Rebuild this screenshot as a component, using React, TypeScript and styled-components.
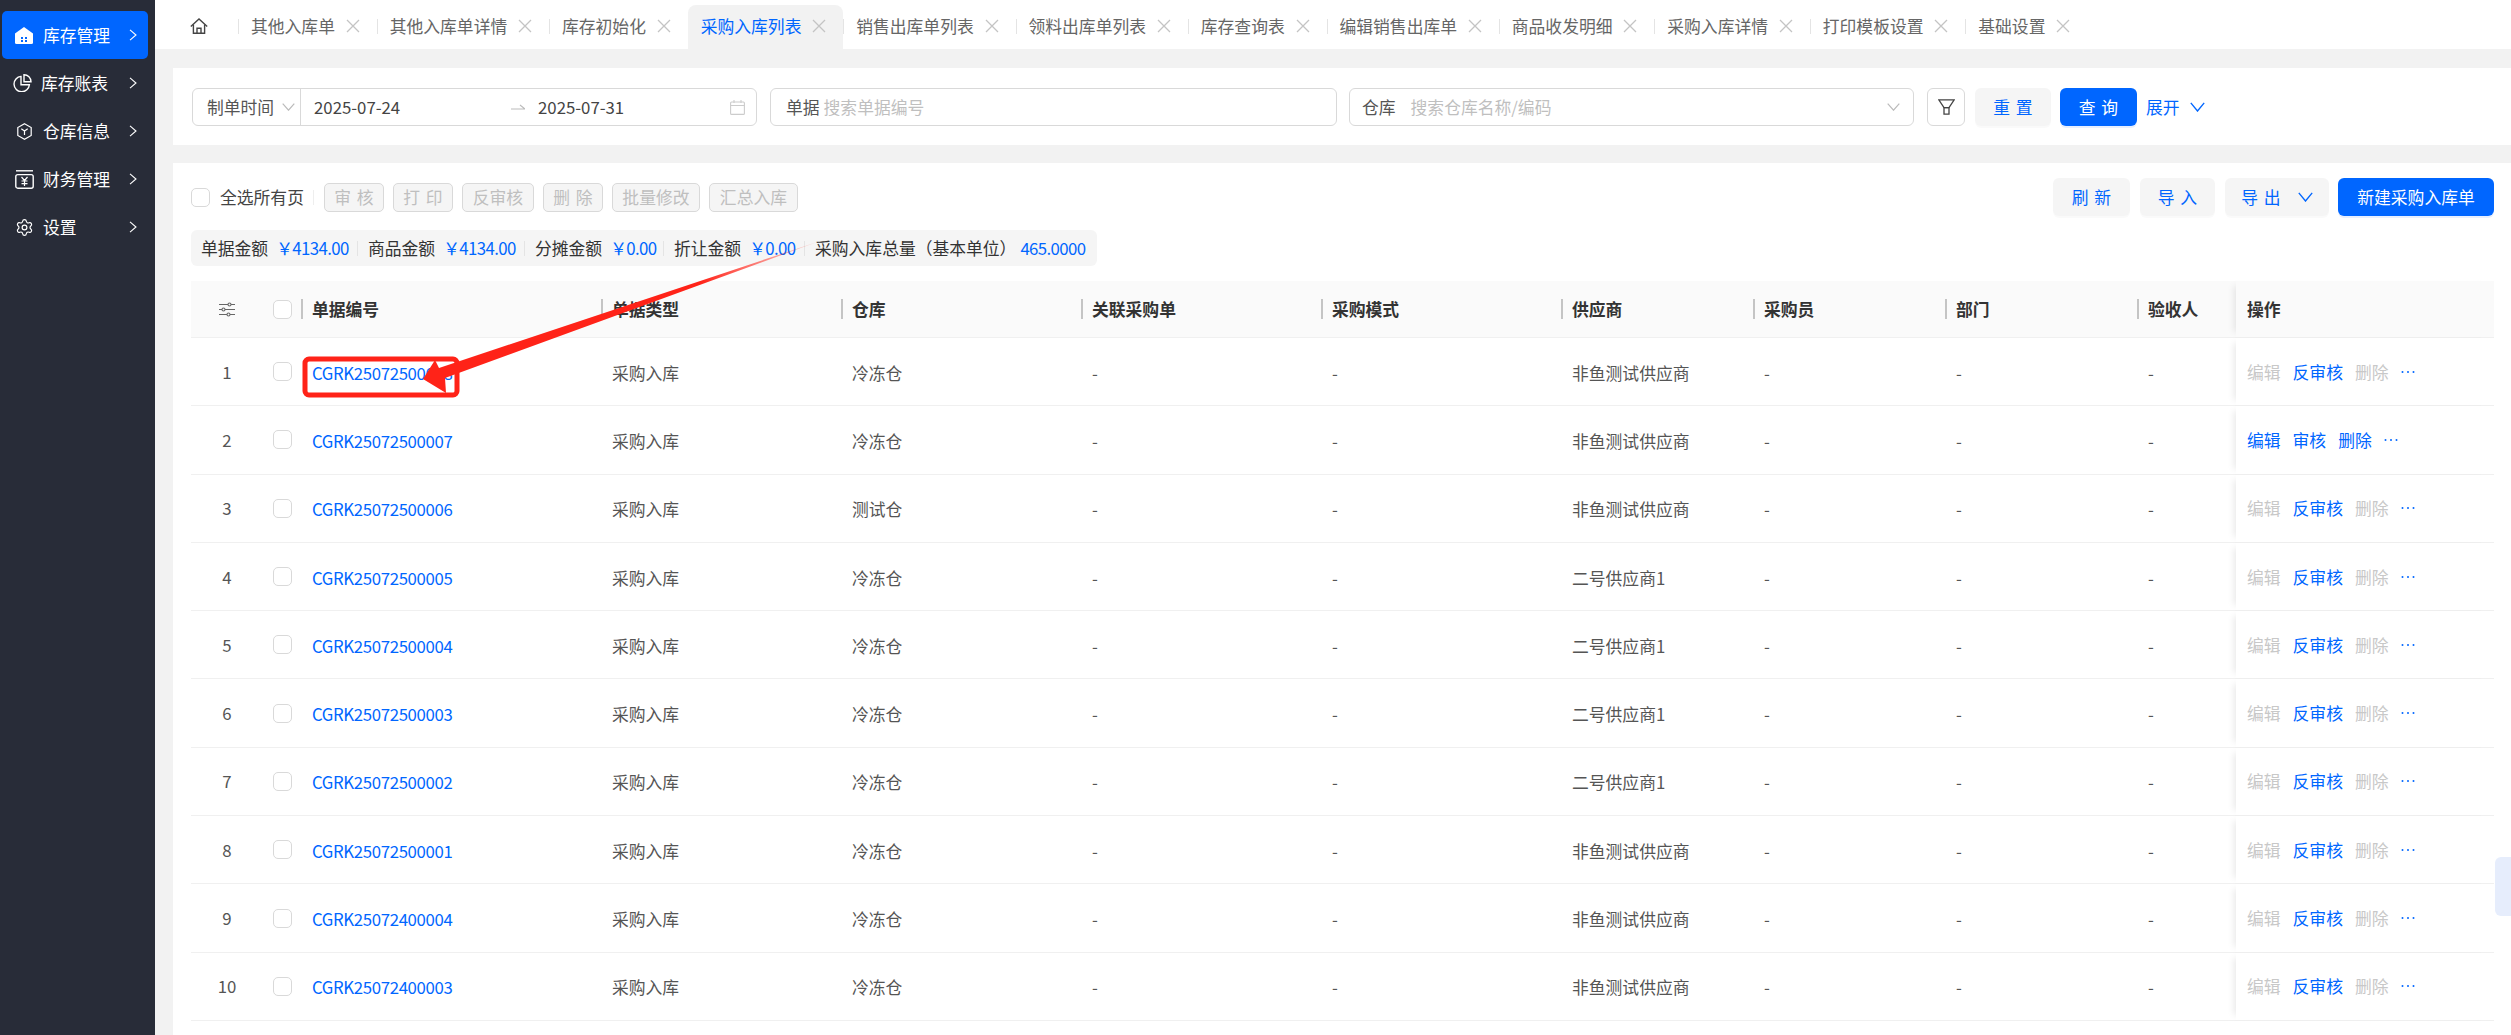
import React from 'react';
import styled, { createGlobalStyle } from 'styled-components';
import { Settings } from 'lucide-react';

const BLUE = '#0066ff';
const COLS = '72px 38px 300px 240px 240px 240px 240px 192px 192px 192px 99px 258px';

const GlobalStyle = createGlobalStyle`
  html, body { margin: 0; padding: 0; height: 100%; overflow: hidden; }
  body {
    font-family: "Noto Sans CJK SC", "Noto Sans", sans-serif;
    font-size: 16.8px;
    color: #555;
    background: #f2f2f2;
  }
  * { box-sizing: border-box; }
`;

const Shell = styled.div`
  position: relative;
  display: flex;
  width: 2511px;
  height: 1035px;
  overflow: hidden;
`;

/* sidebar */
const Sidebar = styled.nav`
  width: 155px;
  flex: none;
  background: #282c38;
  padding-top: 11px;
  display: flex;
  flex-direction: column;
`;

const NavItem = styled.div<{ $active?: boolean }>`
  height: 48px;
  margin: 0 7px 0 2px;
  border-radius: 5px;
  display: flex;
  align-items: center;
  color: #fff;
  background: ${p => (p.$active ? BLUE : 'transparent')};
`;

const NavIcon = styled.span`
  width: 41px;
  flex: none;
  display: flex;
  justify-content: center;
  padding-left: 3px;
`;

const NavLabel = styled.span<{ $shift?: number }>`
  flex: 1;
  margin-left: ${p => p.$shift || 0}px;
  line-height: 1;
  white-space: nowrap;
`;

const NavArrow = styled.svg`
  width: 8px;
  height: 12px;
  margin-right: 11px;
  flex: none;
`;

/* tabs */
const Main = styled.main`
  flex: 1;
  min-width: 0;
  display: flex;
  flex-direction: column;
`;

const TabBar = styled.div`
  height: 49px;
  flex: none;
  background: #fff;
  display: flex;
  align-items: flex-end;
`;

const HomeSlot = styled.div`
  width: 83px;
  height: 44px;
  padding: 0 0 3px 35px;
  display: flex;
  align-items: center;
  flex: none;
`;

const Tab = styled.div<{ $active?: boolean }>`
  position: relative;
  height: 44px;
  flex: none;
  padding: 0 16.8px 2px 13px;
  display: flex;
  align-items: center;
  gap: 11px;
  white-space: nowrap;
  color: ${p => (p.$active ? BLUE : '#666')};
  background: ${p => (p.$active ? '#f2f2f2' : '#fff')};
  border-radius: 8px 8px 0 0;
  &::before {
    content: '';
    display: ${p => (p.$active ? 'none' : 'block')};
    position: absolute;
    left: 0;
    top: 14px;
    width: 1px;
    height: 15px;
    background: #e4e4e4;
  }
`;

const CloseIcon = styled.svg`
  width: 14px;
  height: 14px;
  flex: none;
`;

/* filter card */
const FilterCard = styled.section`
  margin: 19px 0 18px 18px;
  height: 77px;
  flex: none;
  background: #fff;
  padding: 20px 0 0 19px;
  display: flex;
  align-items: flex-start;
`;

const Field = styled.div<{ $w: number; $mr: number }>`
  width: ${p => p.$w}px;
  margin-right: ${p => p.$mr}px;
  flex: none;
  height: 38px;
  border: 1.5px solid #d9d9d9;
  border-radius: 6px;
  display: flex;
  align-items: center;
  color: #555;
  background: #fff;
`;

const TimeSelect = styled.div`
  width: 108px;
  height: 100%;
  flex: none;
  padding-left: 14px;
  display: flex;
  align-items: center;
  gap: 8px;
  border-right: 1.5px solid #d9d9d9;
`;

const DateText = styled.span<{ $w: number; $left: number; $pad: number }>`
  width: ${p => p.$w}px;
  margin-left: ${p => p.$left}px;
  padding-left: ${p => p.$pad}px;
  flex: none;
  color: #444;
`;

const Placeholder = styled.span`
  color: #bfbfbf;
`;

const FieldLabel = styled.span<{ $gap: number; $pad: number }>`
  margin: 0 ${p => p.$gap}px 0 ${p => p.$pad}px;
  flex: none;
`;

const Spacer = styled.span`
  flex: 1;
`;

const TrailIcon = styled.span<{ $mr: number }>`
  display: flex;
  margin-right: ${p => p.$mr}px;
`;

const IconField = styled.div`
  width: 38px;
  height: 38px;
  margin-right: 10px;
  flex: none;
  border: 1.5px solid #d9d9d9;
  border-radius: 6px;
  display: flex;
  align-items: center;
  justify-content: center;
`;

const Button = styled.button<{ $primary?: boolean; $w: number; $mr?: number }>`
  width: ${p => p.$w}px;
  margin-right: ${p => p.$mr || 0}px;
  height: 38px;
  flex: none;
  border: 0;
  border-radius: 6px;
  font: inherit;
  padding: 0;
  display: flex;
  align-items: center;
  justify-content: center;
  gap: 17px;
  white-space: pre;
  word-spacing: 2px;
  color: ${p => (p.$primary ? '#fff' : BLUE)};
  background: ${p => (p.$primary ? BLUE : '#f5f5f5')};
  box-shadow: 0 2px 0 ${p => (p.$primary ? 'rgba(5,95,255,.1)' : 'rgba(0,0,0,.02)')};
`;

const Expand = styled.div`
  display: flex;
  align-items: center;
  height: 38px;
  gap: 10px;
  color: ${BLUE};
`;

/* list card */
const ListCard = styled.section`
  flex: 1;
  margin-left: 18px;
  background: #fff;
  padding: 15px 17px 0 18px;
  min-height: 0;
  overflow: hidden;
`;

const Toolbar = styled.div`
  height: 38px;
  display: flex;
  align-items: center;
  justify-content: space-between;
`;

const ToolGroup = styled.div`
  display: flex;
  align-items: center;
`;

const Check = styled.span`
  width: 19px;
  height: 19px;
  flex: none;
  display: block;
  border: 1px solid #d9d9d9;
  border-radius: 5px;
  background: #fff;
`;

const AllPages = styled.span`
  margin-left: 10px;
  color: #444;
  white-space: nowrap;
`;

const VDivider = styled.span`
  width: 1px;
  height: 15px;
  margin: 0 10px 0 9px;
  background: #eee;
`;

const GhostButton = styled.span<{ $w: number }>`
  width: ${p => p.$w}px;
  height: 29px;
  margin-right: 9px;
  flex: none;
  display: flex;
  align-items: center;
  justify-content: center;
  white-space: pre;
  word-spacing: 2px;
  border: 1px solid #d9d9d9;
  border-radius: 5px;
  background: #f5f5f5;
  color: #bfbfbf;
`;

const SummaryBar = styled.div`
  width: 906px;
  height: 36px;
  margin-top: 14px;
  padding-left: 10px;
  background: #f5f5f5;
  border-radius: 6px;
  display: flex;
  align-items: center;
  color: #333;
  white-space: nowrap;
`;

const SummaryItem = styled.span<{ $w: number; $last?: boolean }>`
  width: ${p => p.$w}px;
  flex: none;
  position: relative;
  display: flex;
  gap: ${p => (p.$last ? 4 : 8)}px;
  &::after {
    content: '';
    display: ${p => (p.$last ? 'none' : 'block')};
    position: absolute;
    right: 10px;
    top: 5px;
    width: 1px;
    height: 15px;
    background: #e4e4e4;
  }
`;

const Money = styled.span`
  color: ${BLUE};
  letter-spacing: -0.6px;
`;

/* table */
const Table = styled.div`
  margin-top: 15px;
`;

const HeadRow = styled.div`
  display: grid;
  grid-template-columns: ${COLS};
  height: 57px;
  background: #fafafa;
  border-bottom: 1px solid #f0f0f0;
  color: #333;
  font-weight: 700;
`;

const BodyRow = styled.div`
  display: grid;
  grid-template-columns: ${COLS};
  height: 68.3px;
  border-bottom: 1px solid #f0f0f0;
`;

const Cell = styled.div`
  display: flex;
  align-items: center;
  padding-left: 11px;
  white-space: nowrap;
`;

const DataCell = styled(Cell)`
  padding-top: 2px;
`;

const HeadCell = styled(Cell)`
  position: relative;
  &::before {
    content: '';
    position: absolute;
    left: 0;
    top: 18px;
    width: 2px;
    height: 20px;
    background: #c4c4c4;
  }
`;

const IndexCell = styled(Cell)`
  justify-content: center;
  padding: 0;
`;

const CheckCell = styled(Cell)`
  padding-left: 10px;
`;

const DocLink = styled.span`
  color: ${BLUE};
  letter-spacing: -0.35px;
`;

const OpCell = styled(Cell)`
  padding-left: 11px;
  gap: 12px;
  background: inherit;
  box-shadow: -7px 0 7px -5px rgba(0, 0, 0, 0.09);
`;

const HeadOp = styled(OpCell)`
  background: #fafafa;
`;

const OpLink = styled.span<{ $off?: boolean }>`
  color: ${p => (p.$off ? '#c8c8c8' : BLUE)};
`;

const BodyArea = styled.div`
  background: #fff;
`;

const SideTab = styled.div`
  position: absolute;
  right: 0;
  top: 857px;
  width: 16px;
  height: 59px;
  background: #e6edfc;
  border-radius: 6px 0 0 6px;
`;

const Annotation = styled.svg`
  position: absolute;
  left: 0;
  top: 0;
  pointer-events: none;
`;

const Chevron = ({ color = '#bbb', w = 13, h = 8 }: { color?: string; w?: number; h?: number }) => (
  <svg width={w} height={h} viewBox="0 0 13 8" preserveAspectRatio="none" fill="none">
    <path d="M.7.7 6.5 7.2 12.3.7" stroke={color} strokeWidth="1.2" />
  </svg>
);

const Close = () => (
  <CloseIcon viewBox="0 0 14 14" fill="none">
    <path d="M1 1 13 13M13 1 1 13" stroke="#c4c4c4" strokeWidth="1.3" />
  </CloseIcon>
);

const Dots = () => (
  <svg width="14" height="4" viewBox="0 0 14 4" fill={BLUE}>
    <circle cx="1.5" cy="2" r="1" />
    <circle cx="7" cy="2" r="1" />
    <circle cx="12.5" cy="2" r="1" />
  </svg>
);

const HomeOutline = () => (
  <svg width="18" height="16" viewBox="0 0 18 16" fill="none" stroke="#444" strokeWidth="1.4">
    <path d="M.8 8.4 9 1l8.2 7.4" />
    <path d="M3.4 6.6v8.7h11.2V6.6" />
    <path d="M7 15.3v-5h4v5" />
  </svg>
);

const navIcons = [
  <svg key="a" width="18" height="17" viewBox="0 0 18 17">
    <path d="M9 0 18 6.5V15.5q0 1.5-1.5 1.5h-15Q0 17 0 15.5V6.5Z" fill="#fff" />
    <path d="M6 10h2v2H6zM10 10h2v2h-2zM6 13h2v2H6zM10 13h2v2h-2z" fill={BLUE} />
  </svg>,
  <svg key="b" width="19" height="18" viewBox="0 0 19 18" fill="none" stroke="#fff" strokeWidth="1.4" style={{ marginLeft: -4 }}>
    <path d="M8 2.4a7.7 7.7 0 1 0 8.4 8.4H8Z" />
    <path d="M11 .8a7 7 0 0 1 7 7h-7Z" />
  </svg>,
  <svg key="c" width="15" height="17" viewBox="0 0 15 17" fill="none" stroke="#fff" strokeWidth="1.2">
    <path d="M7.5.8 14.2 4.6v7.8L7.5 16.2.8 12.4V4.6Z" />
    <path d="M4.3 5.8 7.5 8l3.2-2.2M7.5 8v4" />
  </svg>,
  <svg key="d" width="19" height="19" viewBox="0 0 19 19" fill="none" stroke="#fff" strokeWidth="1.4">
    <path d="M1 .8h17" />
    <rect x=".8" y="4.6" width="17.4" height="13.6" rx="2" />
    <path d="M6.5 7 9.5 10.5 12.5 7M6.5 11h6M6.5 13.6h6M9.5 10.5v5.5" strokeWidth="1.2" />
  </svg>,
  <Settings key="e" size={19} strokeWidth={1.5} color="#fff" />,
];

const navItems = [
  { label: '库存管理', shift: 0 },
  { label: '库存账表', shift: -2 },
  { label: '仓库信息', shift: 0 },
  { label: '财务管理', shift: 0 },
  { label: '设置', shift: 0 },
];

const tabs = [
  '其他入库单', '其他入库单详情', '库存初始化', '采购入库列表', '销售出库单列表', '领料出库单列表', '库存查询表',
  '编辑销售出库单', '商品收发明细', '采购入库详情', '打印模板设置', '基础设置',
];

const columns = ['单据编号', '单据类型', '仓库', '关联采购单', '采购模式', '供应商', '采购员', '部门', '验收人'];

const rows = [
  ['CGRK25072500008', '冷冻仓', '非鱼测试供应商'],
  ['CGRK25072500007', '冷冻仓', '非鱼测试供应商'],
  ['CGRK25072500006', '测试仓', '非鱼测试供应商'],
  ['CGRK25072500005', '冷冻仓', '二号供应商1'],
  ['CGRK25072500004', '冷冻仓', '二号供应商1'],
  ['CGRK25072500003', '冷冻仓', '二号供应商1'],
  ['CGRK25072500002', '冷冻仓', '二号供应商1'],
  ['CGRK25072500001', '冷冻仓', '非鱼测试供应商'],
  ['CGRK25072400004', '冷冻仓', '非鱼测试供应商'],
  ['CGRK25072400003', '冷冻仓', '非鱼测试供应商'],
];

const App = () => {
  return (
    <Shell>
      <GlobalStyle />
      <Sidebar>
        {navItems.map((item, i) => (
          <NavItem key={item.label} $active={i === 0}>
            <NavIcon>{navIcons[i]}</NavIcon>
            <NavLabel $shift={item.shift}>{item.label}</NavLabel>
            <NavArrow viewBox="0 0 8 12" fill="none">
              <path d="M1 .8 7 6 1 11.2" stroke="#fff" strokeWidth="1.1" />
            </NavArrow>
          </NavItem>
        ))}
      </Sidebar>

      <Main>
        <TabBar>
          <HomeSlot>
            <HomeOutline />
          </HomeSlot>
          {tabs.map(t => (
            <Tab key={t} $active={t === '采购入库列表'}>
              {t}
              <Close />
            </Tab>
          ))}
        </TabBar>

        <FilterCard>
          <Field $w={565} $mr={13}>
            <TimeSelect>
              制单时间
              <Chevron />
            </TimeSelect>
            <DateText $w={210} $left={0} $pad={13}>2025-07-24</DateText>
            <svg width="14" height="6" viewBox="0 0 14 6" fill="none" stroke="#bbb" strokeWidth="1.1">
              <path d="M0 5h14L9 1" />
            </svg>
            <DateText $w={100} $left={13} $pad={0}>2025-07-31</DateText>
            <Spacer />
            <TrailIcon $mr={11}>
              <svg width="15" height="15" viewBox="0 0 15 15" fill="none" stroke="#ccc" strokeWidth="1.1">
                <rect x=".6" y="2" width="13.8" height="12.4" rx="1" />
                <path d="M.6 5.5h13.8M4 0v3M11 0v3" />
              </svg>
            </TrailIcon>
          </Field>
          <Field $w={567} $mr={12}>
            <FieldLabel $pad={15} $gap={4}>单据</FieldLabel>
            <Placeholder>搜索单据编号</Placeholder>
          </Field>
          <Field $w={565} $mr={13}>
            <FieldLabel $pad={12} $gap={15}>仓库</FieldLabel>
            <Placeholder>搜索仓库名称/编码</Placeholder>
            <Spacer />
            <TrailIcon $mr={13}>
              <Chevron />
            </TrailIcon>
          </Field>
          <IconField>
            <svg width="17" height="16" viewBox="0 0 17 16" fill="none" stroke="#444" strokeWidth="1.3">
              <path d="M.8.8h15.4L11 8.6H6Z" />
              <path d="M6 8.6h5v6.6H6z" />
            </svg>
          </IconField>
          <Button $w={76} $mr={9}>重 置</Button>
          <Button $w={77} $mr={9} $primary>查 询</Button>
          <Expand>
            展开
            <Chevron color={BLUE} w={15} h={10} />
          </Expand>
        </FilterCard>

        <ListCard>
          <Toolbar>
            <ToolGroup>
              <Check />
              <AllPages>全选所有页</AllPages>
              <VDivider />
              <GhostButton $w={60}>审 核</GhostButton>
              <GhostButton $w={60}>打 印</GhostButton>
              <GhostButton $w={72}>反审核</GhostButton>
              <GhostButton $w={60}>删 除</GhostButton>
              <GhostButton $w={88}>批量修改</GhostButton>
              <GhostButton $w={89}>汇总入库</GhostButton>
            </ToolGroup>
            <ToolGroup>
              <Button $w={77} $mr={10}>刷 新</Button>
              <Button $w={75} $mr={10}>导 入</Button>
              <Button $w={104} $mr={9}>
                导 出
                <Chevron color={BLUE} w={15} h={10} />
              </Button>
              <Button $w={156} $primary>新建采购入库单</Button>
            </ToolGroup>
          </Toolbar>

          <SummaryBar>
            <SummaryItem $w={167}>单据金额<Money>￥4134.00</Money></SummaryItem>
            <SummaryItem $w={167}>商品金额<Money>￥4134.00</Money></SummaryItem>
            <SummaryItem $w={139}>分摊金额<Money>￥0.00</Money></SummaryItem>
            <SummaryItem $w={141}>折让金额<Money>￥0.00</Money></SummaryItem>
            <SummaryItem $w={280} $last>采购入库总量（基本单位）<Money>465.0000</Money></SummaryItem>
          </SummaryBar>

          <Table>
            <HeadRow>
              <IndexCell>
                <svg width="16" height="15" viewBox="0 0 16 15" fill="none" stroke="#666" strokeWidth="1.1">
                  <path d="M0 2.5h9M12 2.5h4M0 7.5h3M6 7.5h10M0 12.5h8M11 12.5h5" />
                  <circle cx="10.5" cy="2.5" r="1.5" />
                  <circle cx="4.5" cy="7.5" r="1.5" />
                  <circle cx="9.5" cy="12.5" r="1.5" />
                </svg>
              </IndexCell>
              <CheckCell><Check /></CheckCell>
              {columns.map(c => (
                <HeadCell key={c}>{c}</HeadCell>
              ))}
              <HeadOp>操作</HeadOp>
            </HeadRow>
            <BodyArea>
              {rows.map((row, i) => (
                <BodyRow key={row[0]}>
                  <IndexCell>{i + 1}</IndexCell>
                  <CheckCell><Check /></CheckCell>
                  <DataCell><DocLink>{row[0]}</DocLink></DataCell>
                  <DataCell>采购入库</DataCell>
                  <DataCell>{row[1]}</DataCell>
                  <DataCell>-</DataCell>
                  <DataCell>-</DataCell>
                  <DataCell>{row[2]}</DataCell>
                  <DataCell>-</DataCell>
                  <DataCell>-</DataCell>
                  <DataCell>-</DataCell>
                  <OpCell>
                    {i === 1 ? (
                      <>
                        <OpLink>编辑</OpLink>
                        <OpLink>审核</OpLink>
                        <OpLink>删除</OpLink>
                      </>
                    ) : (
                      <>
                        <OpLink $off>编辑</OpLink>
                        <OpLink>反审核</OpLink>
                        <OpLink $off>删除</OpLink>
                      </>
                    )}
                    <Dots />
                  </OpCell>
                </BodyRow>
              ))}
            </BodyArea>
          </Table>
        </ListCard>
      </Main>

      <SideTab />

      <Annotation width="2511" height="1035" viewBox="0 0 2511 1035">
        <defs>
          <linearGradient id="tail" gradientUnits="userSpaceOnUse" x1="820" y1="241" x2="700" y2="283">
            <stop offset="0" stopColor="#ff2318" stopOpacity="0.1" />
            <stop offset="1" stopColor="#ff2318" />
          </linearGradient>
        </defs>
        <rect x="305" y="359" width="152" height="36" rx="4" fill="none" stroke="#ff2318" strokeWidth="5" />
        <path d="M423 379 435 360 439 368 820 241 445 378 446 393Z" fill="url(#tail)" />
      </Annotation>
    </Shell>
  );
};

export default App;
